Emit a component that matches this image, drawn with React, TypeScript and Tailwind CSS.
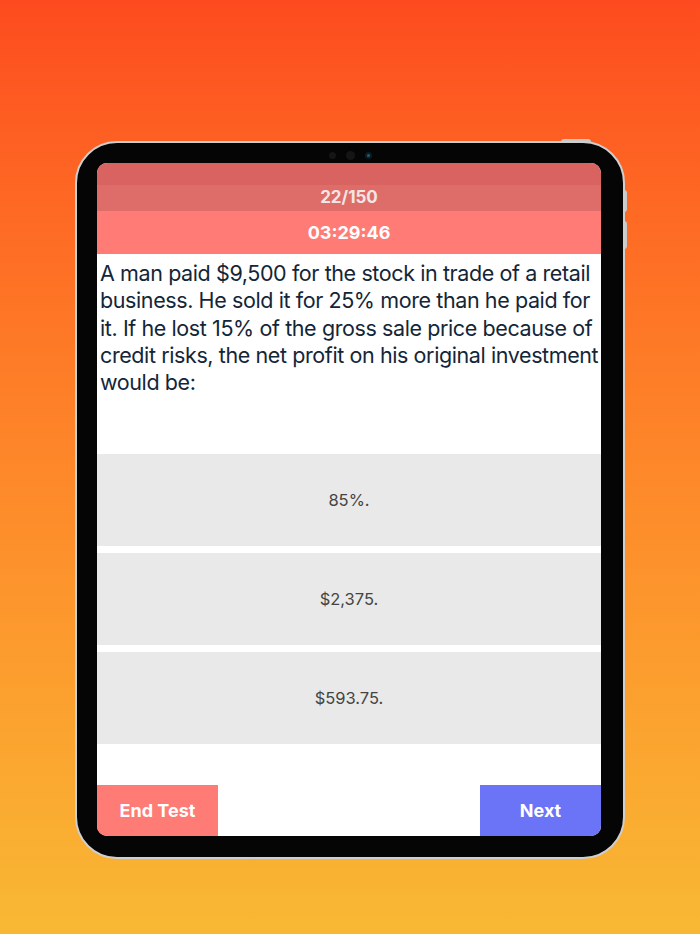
import React from 'react';

const options = ['85%.', '$2,375.', '$593.75.'];

const App = () => {
  return (
    <div
      className="w-[700px] h-[934px] bg-gradient-to-b from-[#fd4b1f] to-[#f8b834] flex justify-center pt-[141px]"
      style={{ fontFamily: 'Inter, "Liberation Sans", sans-serif' }}
    >
      <div className="relative w-[550px] h-[718px]">
        {/* hardware buttons */}
        <div className="absolute right-[-2px] top-[49px] w-[3px] h-[22px] rounded-r bg-[#c9c9c9]" />
        <div className="absolute right-[-2px] top-[80px] w-[3px] h-[28px] rounded-r bg-[#c9c9c9]" />
        <div className="absolute right-[34px] top-[-2px] w-[30px] h-[3px] rounded-t bg-[#c9c9c9]" />

        <div className="relative w-full h-full rounded-[42px] border-[2px] border-[#cfcfcf] bg-[#050505] pl-[20px] pr-[22px] pt-[20px] pb-[21px]">
          {/* camera */}
          <div className="absolute top-[8px] left-0 right-0 flex justify-center items-center gap-[10px]">
            <div className="w-[7px] h-[7px] rounded-full bg-[#151515]" />
            <div className="w-[9px] h-[9px] rounded-full bg-[#151515]" />
            <div className="w-[7px] h-[7px] rounded-full bg-[#0f1a22] flex items-center justify-center">
              <div className="w-[3px] h-[3px] rounded-full bg-[#1f5c78]" />
            </div>
          </div>

          <div className="w-full h-full bg-white rounded-[10px] overflow-hidden flex flex-col">
            <div className="h-[22px] bg-[#d96360]" />
            <div className="h-[26px] bg-[#de6d69] flex items-center justify-center text-[17px] font-bold text-[#f2e6e5]">
              22/150
            </div>
            <div className="h-[43px] bg-[#ff7b76] flex items-center justify-center text-[18px] font-bold text-white">
              03:29:46
            </div>

            <div className="h-[200px] pl-[3px] pr-[1px] pt-[6px] text-[21.5px] leading-[27.3px] tracking-[-0.4px] text-[#132638]">
              A man paid $9,500 for the stock in trade of a retail business. He sold it for 25% more than he paid for it. If he lost 15% of the gross sale price because of credit risks, the net profit on his original investment would be:
            </div>

            <div className="flex flex-col gap-[7px]">
              {options.map(option => (
                <div
                  key={option}
                  className="h-[92px] bg-[#e9e9e9] flex items-center justify-center text-[16.5px] text-[#444444]"
                >
                  {option}
                </div>
              ))}
            </div>

            <div className="flex-1" />

            <div className="h-[51px] flex justify-between">
              <button className="w-[121px] bg-[#ff7b76] text-white text-[18px] font-bold">End Test</button>
              <button className="w-[121px] bg-[#6b73f6] text-white text-[18px] font-bold">Next</button>
            </div>
          </div>
        </div>
      </div>
    </div>
  );
};

export default App;
